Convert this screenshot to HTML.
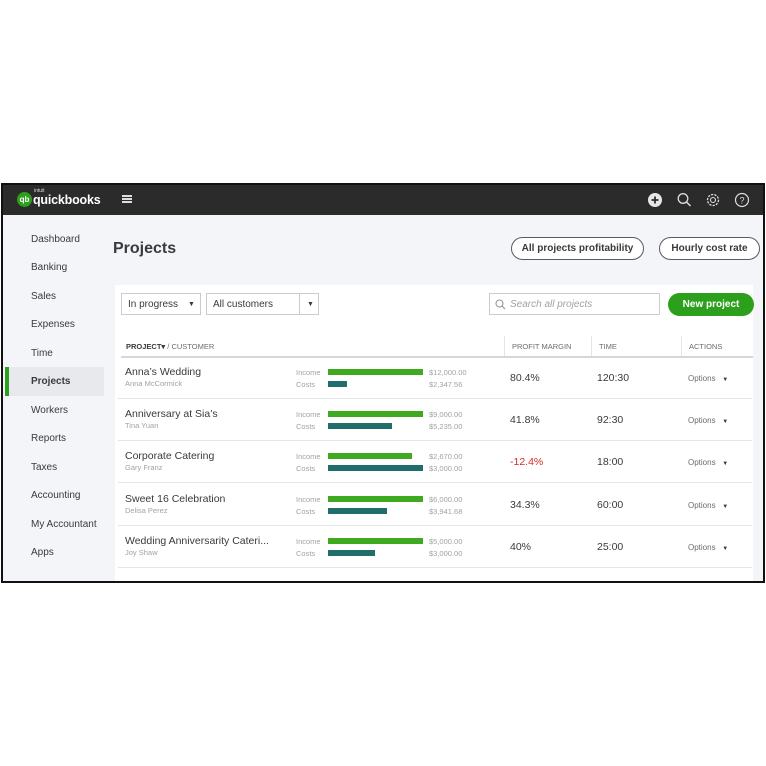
<!DOCTYPE html>
<html><head><style>
*{margin:0;padding:0;box-sizing:border-box}
body{width:766px;height:766px;background:#fff;font-family:"Liberation Sans",sans-serif;position:relative;overflow:hidden}
.a{position:absolute;white-space:nowrap}
#frame{position:absolute;left:1px;top:183px;width:764px;height:400px;border:2px solid #111;background:#f4f5f8;overflow:hidden}
#top{position:absolute;left:0;top:0;width:760px;height:30px;background:#2b2b2b}
.nav{position:absolute;left:28px;font-size:10px;color:#393a3d}
#card{position:absolute;left:112px;top:100px;width:638px;height:300px;background:#fff}
.sel{position:absolute;height:22px;border:1px solid #c9cbcf;background:#fff;font-size:10px;color:#393a3d;display:flex;align-items:center;padding-left:6px}
.pill{position:absolute;height:23px;border:1.5px solid #5a5b5e;border-radius:12px;font-size:10px;font-weight:bold;color:#393a3d;display:flex;align-items:center;justify-content:center;background:#fff}
.hl{position:absolute;left:6px;width:632px;height:1px;background:#e3e5e8}
.t{font-size:10.5px;color:#393a3d}
.s{font-size:7.5px;color:#a0a2a6}
.bar{position:absolute;height:6px}
.g{background:#3eaa1f}.d{background:#1f6e6c}
</style></head><body>
<div id="frame">
<div id="top">
 <div class="a" style="left:14px;top:7px;width:15px;height:15px;border-radius:50%;background:#2ca01c;color:#fff;font-size:8px;font-weight:bold;text-align:center;line-height:15px">qb</div>
 <div class="a" style="left:31px;top:3px;font-size:5px;color:#ddd">intuit</div>
 <div class="a" style="left:30px;top:8px;font-size:12.5px;font-weight:bold;color:#fff;letter-spacing:-0.2px">quickbooks</div>
 <div class="a" style="left:119px;top:10px;width:10px;height:2px;background:#ddd;box-shadow:0 3px 0 #ddd,0 6px 0 #ddd"></div>
 <svg class="a" style="left:644px;top:7px" width="110" height="16" viewBox="0 0 110 16">
  <circle cx="8" cy="8" r="7" fill="#e6e6e6"/><path d="M8 4.5v7M4.5 8h7" stroke="#2b2b2b" stroke-width="1.8"/>
  <circle cx="36" cy="6.5" r="4.8" fill="none" stroke="#ddd" stroke-width="1.3"/><path d="M39.5 10l4 4" stroke="#ddd" stroke-width="1.5"/>
  <circle cx="66" cy="8" r="5.5" fill="none" stroke="#ddd" stroke-width="1.3" stroke-dasharray="2.2 1.2"/><circle cx="66" cy="8" r="2.5" fill="none" stroke="#ddd" stroke-width="1.1"/>
  <circle cx="95" cy="8" r="6.5" fill="none" stroke="#ddd" stroke-width="1.2"/><text x="95" y="11.5" font-size="9" fill="#ddd" text-anchor="middle" font-family="Liberation Sans">?</text>
 </svg>
</div>
<div class="nav" style="top:49px">Dashboard</div>
<div class="nav" style="top:77px">Banking</div>
<div class="nav" style="top:106px">Sales</div>
<div class="nav" style="top:134px">Expenses</div>
<div class="nav" style="top:163px">Time</div>
<div class="a" style="left:2px;top:182px;width:99px;height:29px;background:#e8e9ec"></div>
<div class="a" style="left:2px;top:182px;width:4px;height:29px;background:#2ca01c"></div>
<div class="nav" style="top:191px;font-weight:bold">Projects</div>
<div class="nav" style="top:220px">Workers</div>
<div class="nav" style="top:248px">Reports</div>
<div class="nav" style="top:277px">Taxes</div>
<div class="nav" style="top:305px">Accounting</div>
<div class="nav" style="top:334px">My Accountant</div>
<div class="nav" style="top:362px">Apps</div>
<div class="a" style="left:110px;top:55px;font-size:16px;font-weight:bold;color:#393a3d">Projects</div>
<div class="pill" style="left:508px;top:52px;width:133px">All projects profitability</div>
<div class="pill" style="left:656px;top:52px;width:101px">Hourly cost rate</div>
<div id="card">
 <div class="sel" style="left:6px;top:8px;width:80px">In progress<span style="position:absolute;left:66px;font-size:7px">▼</span></div>
 <div class="sel" style="left:91px;top:8px;width:113px">All customers<span style="position:absolute;left:92px;top:0;width:1px;height:20px;background:#c9cbcf"></span><span style="position:absolute;left:100px;font-size:7px">▼</span></div>
 <div class="sel" style="left:374px;top:8px;width:171px;color:#a0a2a6;font-style:italic;padding-left:20px">Search all projects
  <svg style="position:absolute;left:5px;top:5px" width="11" height="11"><circle cx="4.5" cy="4.5" r="3.5" fill="none" stroke="#999" stroke-width="1.1"/><path d="M7 7l3 3" stroke="#999" stroke-width="1.2"/></svg></div>
 <div class="a" style="left:553px;top:8px;width:86px;height:23px;border-radius:12px;background:#2ca01c;color:#fff;font-size:10px;font-weight:bold;text-align:center;line-height:23px">New project</div>
 <div class="a" style="left:11px;top:57px;font-size:7.5px;color:#393a3d"><b>PROJECT▾</b> <span style="color:#6b6c72">/ CUSTOMER</span></div>
 <div class="a" style="left:397px;top:57px;font-size:7.5px;color:#6b6c72">PROFIT MARGIN</div>
 <div class="a" style="left:484px;top:57px;font-size:7.5px;color:#6b6c72">TIME</div>
 <div class="a" style="left:574px;top:57px;font-size:7.5px;color:#6b6c72">ACTIONS</div>
 <div class="a" style="left:389px;top:51px;width:1px;height:20px;background:#e3e5e8"></div>
 <div class="a" style="left:476px;top:51px;width:1px;height:20px;background:#e3e5e8"></div>
 <div class="a" style="left:566px;top:51px;width:1px;height:20px;background:#e3e5e8"></div>
 <div class="hl" style="top:71px;height:1.5px;background:#d4d7dc"></div>
</div>
</div>
<div id="rows"></div>
<script>
const R=[["Anna’s Wedding","Anna McCormick",95,"$12,000.00",19,"$2,347.56","80.4%","120:30"],
["Anniversary at Sia’s","Tina Yuan",95,"$9,000.00",64,"$5,235.00","41.8%","92:30"],
["Corporate Catering","Gary Franz",84,"$2,670.00",95,"$3,000.00","-12.4%","18:00"],
["Sweet 16 Celebration","Delisa Perez",95,"$6,000.00",59,"$3,941.68","34.3%","60:00"],
["Wedding Anniversarity Cateri...","Joy Shaw",95,"$5,000.00",47,"$3,000.00","40%","25:00"]];
let h="";R.forEach((r,i)=>{const y=357+i*42.2;
h+=`<div class="a t" style="left:125px;top:${y+9}px">${r[0]}</div><div class="a s" style="left:125px;top:${y+22}px">${r[1]}</div>
<div class="a s" style="left:296px;top:${y+11}px">Income</div><div class="a s" style="left:296px;top:${y+23}px">Costs</div>
<div class="a bar g" style="left:328px;top:${y+12}px;width:${r[2]}px"></div><div class="a bar d" style="left:328px;top:${y+24}px;width:${r[4]}px"></div>
<div class="a s" style="left:429px;top:${y+11}px">${r[3]}</div><div class="a s" style="left:429px;top:${y+23}px">${r[5]}</div>
<div class="a" style="left:510px;top:${y+15}px;font-size:10.5px;color:${r[6][0]=='-'?'#d52b1e':'#393a3d'}">${r[6]}</div>
<div class="a" style="left:597px;top:${y+15}px;font-size:10.5px;color:#393a3d">${r[7]}</div>
<div class="a" style="left:688px;top:${y+17}px;font-size:8px;color:#6b6c72">Options &nbsp;&nbsp;<span style="font-size:6px;color:#393a3d">▼</span></div>
<div class="a" style="left:118px;top:${y+41}px;width:634px;height:1px;background:#e3e5e8"></div>`});
document.getElementById('rows').innerHTML=h;
</script>
</body></html>
